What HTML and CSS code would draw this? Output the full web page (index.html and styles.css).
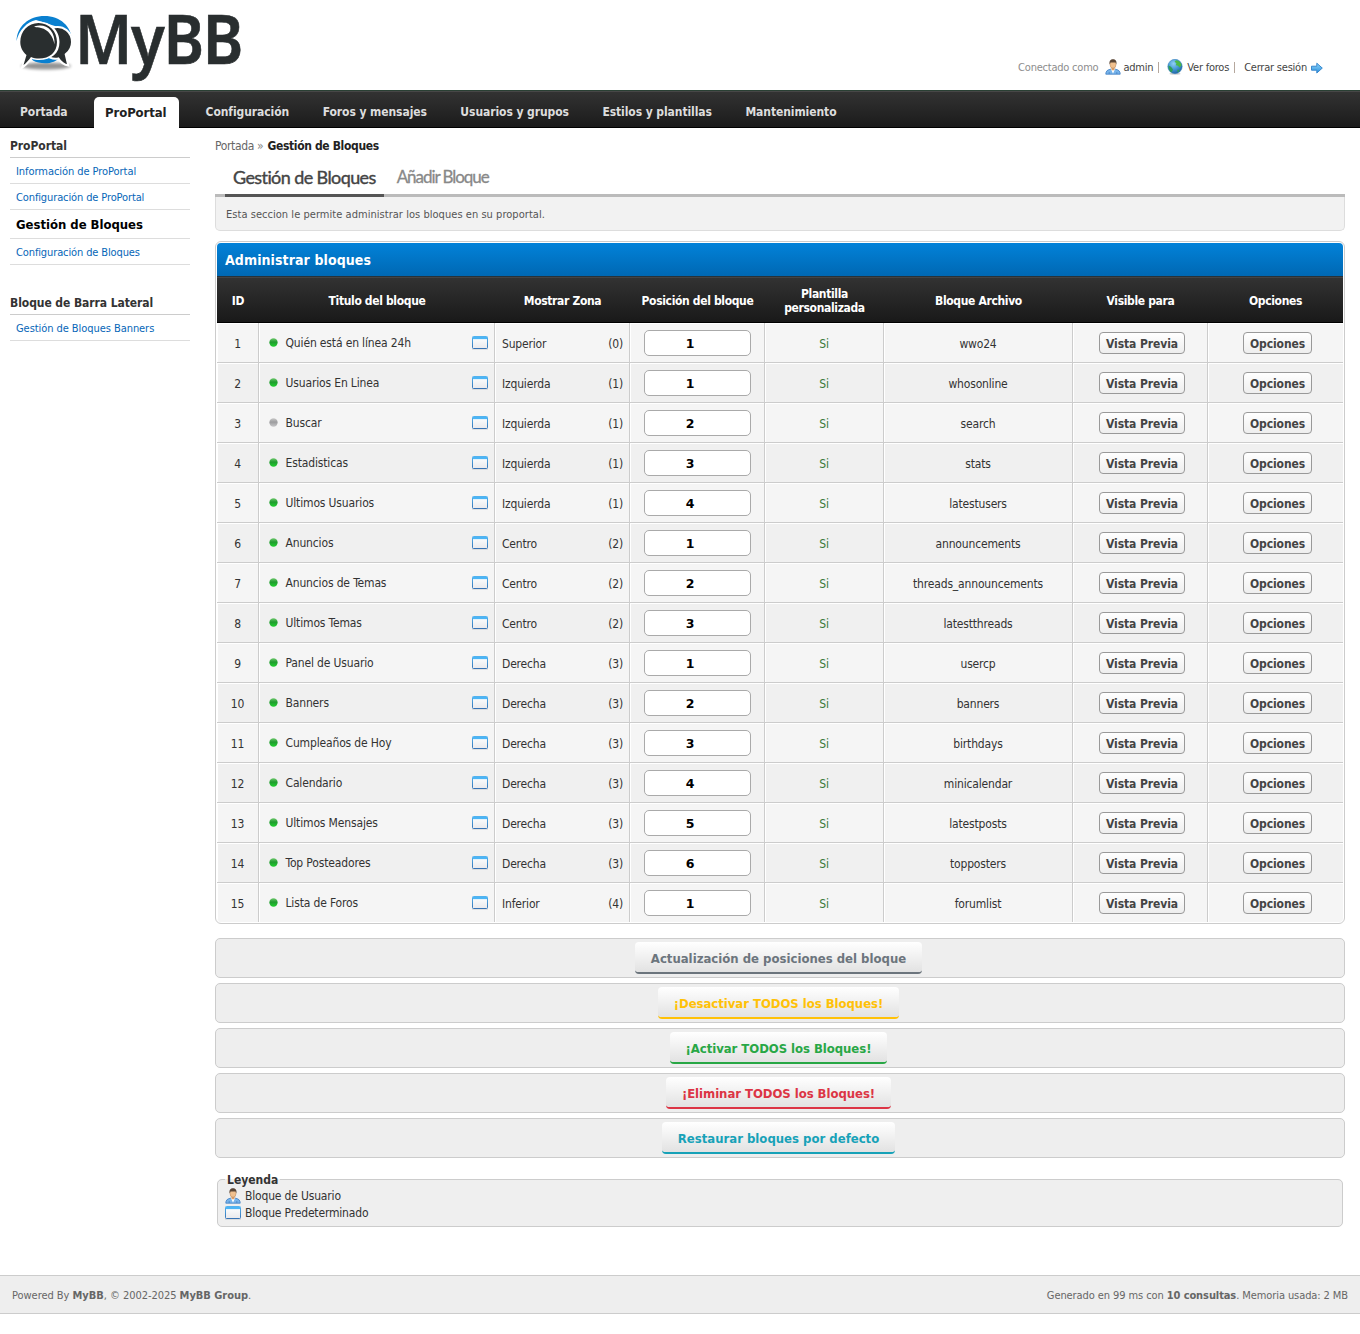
FILE: index.html
```html
<!DOCTYPE html>
<html lang="es">
<head>
<meta charset="utf-8">
<title>Gestión de Bloques</title>
<link rel="stylesheet" href="styles.css">
</head>
<body>
<svg class="sprite" width="0" height="0" aria-hidden="true">
  <defs>
    <linearGradient id="g-win" x1="0" y1="0" x2="0" y2="1"><stop offset="0" stop-color="#fff"/><stop offset="1" stop-color="#e9e9ec"/></linearGradient>
    <linearGradient id="g-edge" x1="0" y1="0" x2="0" y2="1"><stop offset="0" stop-color="#52b2ee"/><stop offset="1" stop-color="#3773b5"/></linearGradient>
    <linearGradient id="g-on" x1="0" y1="0" x2="0" y2="1"><stop offset="0" stop-color="#6cc86c"/><stop offset=".45" stop-color="#209a2e"/><stop offset="1" stop-color="#1fd02e"/></linearGradient>
    <linearGradient id="g-off" x1="0" y1="0" x2="0" y2="1"><stop offset="0" stop-color="#c8c8c8"/><stop offset=".45" stop-color="#9c9c9e"/><stop offset="1" stop-color="#c6c6c8"/></linearGradient>
    <radialGradient id="g-globe" cx=".4" cy=".3" r=".7"><stop offset="0" stop-color="#8fd0f5"/><stop offset=".6" stop-color="#3f93d2"/><stop offset="1" stop-color="#2466a5"/></radialGradient>
    <linearGradient id="g-arrow" x1="0" y1="0" x2="0" y2="1"><stop offset="0" stop-color="#8fd8fb"/><stop offset="1" stop-color="#2b8fdd"/></linearGradient>
    <filter id="f-soft" x="-20%" y="-80%" width="140%" height="260%"><feGaussianBlur stdDeviation="1.8"/></filter>
  </defs>
  <symbol id="win" viewBox="0 0 16 14">
    <rect x=".5" y=".5" width="15" height="12" rx=".8" fill="url(#g-win)" stroke="url(#g-edge)"/>
    <rect x="1" y="1" width="14" height="2" fill="#4cb5f5"/>
    <rect x="1" y="3" width="14" height="1" fill="#e4f3fc"/>
    <rect x="0" y="13" width="16" height="1" fill="#000" opacity=".08"/>
  </symbol>
  <symbol id="on" viewBox="0 0 10 10"><circle cx="5" cy="5" r="4.600" fill="url(#g-on)"/></symbol>
  <symbol id="off" viewBox="0 0 10 10"><circle cx="5" cy="5" r="4.600" fill="url(#g-off)"/></symbol>
  <symbol id="user" viewBox="0 0 16 16">
    <path d="M.8 15.200c0-3 1.400-4.400 4.800-5h4.800c3.400.6 4.800 2 4.800 5z" fill="#76b3ea" stroke="#3f7fc4" stroke-width=".8"/>
    <path d="M5.800 9.800 8 14.800l2.200-5z" fill="#fff"/>
    <path d="M6.500 8h3v2.300L8 11.800 6.500 10.300z" fill="#dda06a"/>
    <ellipse cx="8" cy="5.500" rx="3" ry="3.800" fill="#f0c08e" stroke="#a8713f" stroke-width=".4"/>
    <path d="M4.600 5.400C4 1.900 5.600.3 8 .3s4 1.600 3.400 5.100L10.700 3.600 5.500 3.400z" fill="#5a4636"/>
    <path d="M4.200 15v-2M11.800 15v-2" stroke="#3f7fc4" stroke-width=".7"/>
  </symbol>
  <symbol id="globe" viewBox="0 0 16 16">
    <ellipse cx="8" cy="14.800" rx="5.500" ry="1" fill="#000" opacity=".18"/>
    <circle cx="8" cy="7.500" r="7.200" fill="url(#g-globe)" stroke="#2d78b4" stroke-width=".5"/>
    <path d="M9 1.200c3 .3 5 2.200 5.600 5l-2 2.400-1.600-1.800-2.200-.6.600-2-1.800-1.400z" fill="#4db848"/>
    <path d="M1.500 6.500 4 7.800l2 2.600-1.400 3.200C2.600 12.400 1.100 9.600 1.500 6.500zM10.500 10.500l2 .5-1 2.200-1.200-.8z" fill="#2e9e58"/>
  </symbol>
  <symbol id="arrow" viewBox="0 0 12 12">
    <path d="M.5 4.200h5.300V1.200l5.500 4.900-5.500 4.900V8.200H.5z" fill="url(#g-arrow)" stroke="#2b7fc9" stroke-width=".9" stroke-linejoin="round"/>
  </symbol>
</svg>

<header class="header">
  <svg class="logo" width="270" height="90" viewBox="0 0 270 90" role="img" aria-label="MyBB">
    <ellipse cx="46" cy="66" rx="25" ry="3.500" fill="#000" opacity=".42" filter="url(#f-soft)"/>
    <path d="M16.500 41C17 26 29 16 44.500 16S71.500 26 72 41C70 34 65 29 58 27L36 20C27 22 19 30 16.500 41z" fill="#0a80d0"/>
    <path d="M30 57h30c-3 4-8.500 6.300-15 6.300-4.500 0-9-1-12-2.700z" fill="#0a80d0"/>
    <path d="M52 28c12-4 20 5 20 14 0 6-2.800 9.700-6.300 12.400l2.600 11.200c-5-.8-8-4-10-7.200C48 60 44 54 44 44c0-9 1-14 8-16z" fill="#292e2f" stroke="#fff" stroke-width="2"/>
    <path d="M38.500 21.500C51 21.500 59.500 30.500 59.500 42S51.500 60 39 60c-2.500 0-5-.3-7-1-3 4-6.500 8.200-12 11L25 55.500C21.500 52 19.300 47.500 19.300 42 19.300 30.500 27 21.500 38.500 21.500z" fill="#fff"/>
    <path d="M38.500 23C49 23 57 31.500 57 42S49.500 58.500 39 58.500c-2.800 0-5.500-.5-8-1.500-2.500 3.500-4.800 6-7.500 8L26.500 55C22.500 51.500 20.300 47.500 20.300 42 20.300 31.500 28 23 38.500 23z" fill="#292e2f"/>
    <path d="M34 26.600c11-4 21.500 3 20.500 17.900-1.500-8-6-15-13.500-16.600-2.500-.5-4 0-7-1.300z" fill="#fff"/>
    <text class="logo-text" x="75" y="64" textLength="167" lengthAdjust="spacingAndGlyphs">MyBB</text>
  </svg>
  <div class="welcome">
    <span class="muted">Conectado como</span>
    <svg class="w-user" width="16" height="16"><use href="#user"/></svg><a>admin</a><i class="sep"></i>
    <svg class="w-globe" width="16" height="16"><use href="#globe"/></svg><a>Ver foros</a><i class="sep"></i>
    <a class="w-out">Cerrar sesión</a><svg class="w-arrow" width="12" height="12"><use href="#arrow"/></svg>
  </div>
</header>

<nav class="nav">
  <a>Portada</a><a class="active">ProPortal</a><a>Configuración</a><a>Foros y mensajes</a><a>Usuarios y grupos</a><a>Estilos y plantillas</a><a>Mantenimiento</a>
</nav>

<div class="page">
  <aside class="side">
    <h3>ProPortal</h3>
    <ul>
      <li><a>Información de ProPortal</a></li>
      <li><a>Configuración de ProPortal</a></li>
      <li class="active"><a>Gestión de Bloques</a></li>
      <li><a>Configuración de Bloques</a></li>
    </ul>
    <h3>Bloque de Barra Lateral</h3>
    <ul>
      <li><a>Gestión de Bloques Banners</a></li>
    </ul>
  </aside>

  <main class="main">
    <div class="crumb"><a>Portada</a> <span>»</span> <b>Gestión de Bloques</b></div>
    <div class="tabs"><a class="active">Gestión de Bloques</a><a>Añadir Bloque</a></div>
    <div class="intro">Esta seccion le permite administrar los bloques en su proportal.</div>

    <section class="box">
      <h2>Administrar bloques</h2>
      <div class="row head"><div>ID</div><div>Titulo del bloque</div><div>Mostrar Zona</div><div>Posición del bloque</div><div>Plantilla personalizada</div><div>Bloque Archivo</div><div>Visible para</div><div>Opciones</div></div>
      <div class="row"><div>1</div><div class="title"><svg class="dot"><use href="#on"/></svg><span>Quién está en línea 24h</span><svg class="win"><use href="#win"/></svg></div><div class="zone"><span>Superior</span><span>(0)</span></div><div><input type="text" value="1"></div><div class="yes">Si</div><div>wwo24</div><div class="act"><a>Vista Previa</a></div><div class="act"><a>Opciones</a></div></div>
      <div class="row"><div>2</div><div class="title"><svg class="dot"><use href="#on"/></svg><span>Usuarios En Linea</span><svg class="win"><use href="#win"/></svg></div><div class="zone"><span>Izquierda</span><span>(1)</span></div><div><input type="text" value="1"></div><div class="yes">Si</div><div>whosonline</div><div class="act"><a>Vista Previa</a></div><div class="act"><a>Opciones</a></div></div>
      <div class="row"><div>3</div><div class="title"><svg class="dot"><use href="#off"/></svg><span>Buscar</span><svg class="win"><use href="#win"/></svg></div><div class="zone"><span>Izquierda</span><span>(1)</span></div><div><input type="text" value="2"></div><div class="yes">Si</div><div>search</div><div class="act"><a>Vista Previa</a></div><div class="act"><a>Opciones</a></div></div>
      <div class="row"><div>4</div><div class="title"><svg class="dot"><use href="#on"/></svg><span>Estadisticas</span><svg class="win"><use href="#win"/></svg></div><div class="zone"><span>Izquierda</span><span>(1)</span></div><div><input type="text" value="3"></div><div class="yes">Si</div><div>stats</div><div class="act"><a>Vista Previa</a></div><div class="act"><a>Opciones</a></div></div>
      <div class="row"><div>5</div><div class="title"><svg class="dot"><use href="#on"/></svg><span>Ultimos Usuarios</span><svg class="win"><use href="#win"/></svg></div><div class="zone"><span>Izquierda</span><span>(1)</span></div><div><input type="text" value="4"></div><div class="yes">Si</div><div>latestusers</div><div class="act"><a>Vista Previa</a></div><div class="act"><a>Opciones</a></div></div>
      <div class="row"><div>6</div><div class="title"><svg class="dot"><use href="#on"/></svg><span>Anuncios</span><svg class="win"><use href="#win"/></svg></div><div class="zone"><span>Centro</span><span>(2)</span></div><div><input type="text" value="1"></div><div class="yes">Si</div><div>announcements</div><div class="act"><a>Vista Previa</a></div><div class="act"><a>Opciones</a></div></div>
      <div class="row"><div>7</div><div class="title"><svg class="dot"><use href="#on"/></svg><span>Anuncios de Temas</span><svg class="win"><use href="#win"/></svg></div><div class="zone"><span>Centro</span><span>(2)</span></div><div><input type="text" value="2"></div><div class="yes">Si</div><div>threads_announcements</div><div class="act"><a>Vista Previa</a></div><div class="act"><a>Opciones</a></div></div>
      <div class="row"><div>8</div><div class="title"><svg class="dot"><use href="#on"/></svg><span>Ultimos Temas</span><svg class="win"><use href="#win"/></svg></div><div class="zone"><span>Centro</span><span>(2)</span></div><div><input type="text" value="3"></div><div class="yes">Si</div><div>latestthreads</div><div class="act"><a>Vista Previa</a></div><div class="act"><a>Opciones</a></div></div>
      <div class="row"><div>9</div><div class="title"><svg class="dot"><use href="#on"/></svg><span>Panel de Usuario</span><svg class="win"><use href="#win"/></svg></div><div class="zone"><span>Derecha</span><span>(3)</span></div><div><input type="text" value="1"></div><div class="yes">Si</div><div>usercp</div><div class="act"><a>Vista Previa</a></div><div class="act"><a>Opciones</a></div></div>
      <div class="row"><div>10</div><div class="title"><svg class="dot"><use href="#on"/></svg><span>Banners</span><svg class="win"><use href="#win"/></svg></div><div class="zone"><span>Derecha</span><span>(3)</span></div><div><input type="text" value="2"></div><div class="yes">Si</div><div>banners</div><div class="act"><a>Vista Previa</a></div><div class="act"><a>Opciones</a></div></div>
      <div class="row"><div>11</div><div class="title"><svg class="dot"><use href="#on"/></svg><span>Cumpleaños de Hoy</span><svg class="win"><use href="#win"/></svg></div><div class="zone"><span>Derecha</span><span>(3)</span></div><div><input type="text" value="3"></div><div class="yes">Si</div><div>birthdays</div><div class="act"><a>Vista Previa</a></div><div class="act"><a>Opciones</a></div></div>
      <div class="row"><div>12</div><div class="title"><svg class="dot"><use href="#on"/></svg><span>Calendario</span><svg class="win"><use href="#win"/></svg></div><div class="zone"><span>Derecha</span><span>(3)</span></div><div><input type="text" value="4"></div><div class="yes">Si</div><div>minicalendar</div><div class="act"><a>Vista Previa</a></div><div class="act"><a>Opciones</a></div></div>
      <div class="row"><div>13</div><div class="title"><svg class="dot"><use href="#on"/></svg><span>Ultimos Mensajes</span><svg class="win"><use href="#win"/></svg></div><div class="zone"><span>Derecha</span><span>(3)</span></div><div><input type="text" value="5"></div><div class="yes">Si</div><div>latestposts</div><div class="act"><a>Vista Previa</a></div><div class="act"><a>Opciones</a></div></div>
      <div class="row"><div>14</div><div class="title"><svg class="dot"><use href="#on"/></svg><span>Top Posteadores</span><svg class="win"><use href="#win"/></svg></div><div class="zone"><span>Derecha</span><span>(3)</span></div><div><input type="text" value="6"></div><div class="yes">Si</div><div>topposters</div><div class="act"><a>Vista Previa</a></div><div class="act"><a>Opciones</a></div></div>
      <div class="row"><div>15</div><div class="title"><svg class="dot"><use href="#on"/></svg><span>Lista de Foros</span><svg class="win"><use href="#win"/></svg></div><div class="zone"><span>Inferior</span><span>(4)</span></div><div><input type="text" value="1"></div><div class="yes">Si</div><div>forumlist</div><div class="act"><a>Vista Previa</a></div><div class="act"><a>Opciones</a></div></div>
    </section>

    <div class="bars">
      <div class="bar"><button class="btn grey">Actualización de posiciones del bloque</button></div>
      <div class="bar"><button class="btn amber">¡Desactivar TODOS los Bloques!</button></div>
      <div class="bar"><button class="btn green">¡Activar TODOS los Bloques!</button></div>
      <div class="bar"><button class="btn red">¡Eliminar TODOS los Bloques!</button></div>
      <div class="bar"><button class="btn teal">Restaurar bloques por defecto</button></div>
    </div>

    <fieldset class="legend">
      <legend>Leyenda</legend>
      <div><svg width="16" height="16"><use href="#user"/></svg>Bloque de Usuario</div>
      <div><svg width="16" height="14"><use href="#win"/></svg>Bloque Predeterminado</div>
    </fieldset>
  </main>
</div>

<footer class="footer">
  <span class="f-left">Powered By <b>MyBB</b>, © 2002-2025 <b>MyBB Group</b>.</span>
  <span class="f-right">Generado en 99 ms con <b>10 consultas</b>. Memoria usada: 2 MB</span>
</footer>
</body>
</html>
```
FILE: styles.css
```css
* { box-sizing: border-box; }

body {
  margin: 0;
  background: #fff;
  color: #333;
  font: 12px/16px "DejaVu Sans Condensed", "DejaVu Sans", sans-serif;
  letter-spacing: -0.17px;
}

svg { display: block; flex: none; }
.sprite { position: absolute; }
h2, h3, ul { margin: 0; padding: 0; list-style: none; }

/* Header */
.header {
  height: 90px;
  display: flex;
  justify-content: space-between;
  align-items: flex-start;
}
.logo { overflow: visible; }
.logo-text {
  font: 600 68.5px "Noto Sans", sans-serif;
  fill: #292e2f;
  stroke: #292e2f;
  stroke-width: 0.6px;
  letter-spacing: -1.5px;
}
.welcome {
  display: flex;
  align-items: center;
  height: 18px;
  margin: 58px 37px 0 0;
  font-size: 11px;
  line-height: 18px;
  letter-spacing: -0.22px;
  color: #444;
}
.welcome span, .welcome a { padding-top: 1px; }
.muted { color: #8d8d8d; margin-right: 7px; }
.w-user { margin-right: 2px; }
.w-globe { margin: 0 4px 0 8px; }
.w-out { margin-left: 9px; }
.w-arrow { margin: 2px 0 0 4px; }
.sep { width: 1px; height: 11px; margin-left: 5px; background: #b5a79d; }

/* Main navigation */
.nav {
  height: 38px;
  display: flex;
  align-items: flex-end;
  padding-left: 9px;
  border-top: 1px solid #2a4034;
  border-bottom: 1px solid #000;
  background: linear-gradient(#333, #1b1b1b);
  box-shadow: inset 0 1px #474747;
  font-weight: bold;
  letter-spacing: -0.08px;
}
.nav a { color: #ddd; height: 30px; line-height: 30px; padding: 0 11px; margin-right: 11.500px; }
.nav a.active {
  width: 85px;
  height: 31px;
  line-height: 32px;
  margin: 0 15.500px -1px 4px;
  background: #fff;
  color: #222;
  border-radius: 5px 5px 0 0;
  font-size: 13px;
  letter-spacing: -0.1px;
}

/* Two column layout */
.page { display: flex; gap: 25px; padding: 0 15px 0 10px; height: 1147px; }
.side { width: 180px; flex: none; }
.main { flex: 1; min-width: 0; }

.side h3 {
  height: 30px;
  padding-top: 10px;
  border-bottom: 1px solid #ccc;
  font-size: 12px;
  line-height: 16px;
  letter-spacing: -0.07px;
}
.side h3:not(:first-child) { margin-top: 20px; }
.side li {
  height: 26px;
  padding-left: 6px;
  border-bottom: 1px solid #ddd;
  font-size: 11px;
  line-height: 27px;
  letter-spacing: -0.12px;
}
.side li:first-child { letter-spacing: -0.06px; }
.side li.active { height: 29px; font-weight: bold; font-size: 13px; line-height: 29px; letter-spacing: -0.03px; }
.side li a { color: #0666b8; }
.side li.active a { color: #000; }

.crumb { height: 38px; padding-top: 10px; color: #888; letter-spacing: -0.35px; }
.crumb a { color: #666; }
.crumb b { color: #222; margin-left: 1px; }

.tabs {
  display: flex;
  height: 31px;
  padding-left: 10px;
  border-bottom: 3px solid #bbb;
  border-radius: 5px 5px 0 0;
  font-family: Lato, sans-serif;
}
.tabs a {
  height: 31px;
  margin-left: 13px;
  color: #888;
  font-size: 17px;
  line-height: 22px;
  letter-spacing: -1.05px;
  -webkit-text-stroke: 0.3px;
}
.tabs a.active {
  margin: 0;
  padding: 0 8px;
  border-bottom: 3px solid #555;
  color: #444;
  font-size: 18px;
  line-height: 23px;
  letter-spacing: -0.6px;
  -webkit-text-stroke: 0.4px;
}
.intro {
  height: 34px;
  padding-left: 10px;
  border: 1px solid #ddd;
  border-top: 0;
  border-radius: 0 0 5px 5px;
  background: #f2f2f2;
  color: #555;
  font-size: 11px;
  line-height: 35px;
  letter-spacing: 0.04px;
}

/* Block table */
.box {
  margin-top: 10px;
  padding: 1px;
  border: 1px solid #ccc;
  border-radius: 6px;
}
.box h2 {
  height: 33px;
  padding-left: 8px;
  border-radius: 4px 4px 0 0;
  background: linear-gradient(#0282d9, #0068b3);
  color: #fff;
  font-size: 14px;
  line-height: 34px;
  letter-spacing: 0.09px;
}
.row {
  display: grid;
  grid-template-columns: 42px 236px 135px 135px 119px 189px 135px 135px;
  height: 40px;
  text-align: center;
}
.row > div {
  display: flex;
  align-items: center;
  justify-content: center;
  padding-top: 2px;
  border: solid #ccc;
  border-width: 0 1px 1px 0;
  background: #f5f5f5;
  box-shadow: inset 1px 1px #fff;
}
.row > div:last-child { border-right: 0; }
.row:nth-of-type(odd) > div { background: #f0f0f0; }
.row:last-child { height: 39px; }
.row:last-child > div { border-bottom: 0; }
.row:last-child > div:first-child { border-bottom-left-radius: 4px; }
.row:last-child > div:last-child { border-bottom-right-radius: 4px; }

.row.head {
  height: 47px;
  background: linear-gradient(#333, #191919);
  border-top: 1px solid #26323a;
  border-bottom: 1px solid #000;
  box-shadow: inset 0 1px #444;
  color: #fff;
  font-weight: bold;
  line-height: 14px;
  letter-spacing: -0.35px;
}
.row.head > div { background: none; border: 0; box-shadow: none; padding: 3px 3px 0; }

.row > .title { padding: 0 6px 0 10px; justify-content: flex-start; letter-spacing: -0.15px; }
.title .dot { width: 9px; height: 9px; margin-right: 7.500px; }
.title .win { width: 16px; height: 14px; margin-left: auto; }
.row > .zone { justify-content: space-between; padding-left: 7px; padding-right: 6px; }
.row > .yes { color: #3a7a3a; }

input {
  width: 107px;
  height: 26px;
  margin: -1px 0 0;
  padding: 0 14px 0 0;
  border: 1px solid #aaa;
  border-radius: 5px;
  background: #fff;
  color: #000;
  font: bold 12.5px "DejaVu Sans", sans-serif;
  text-align: center;
}
.row > .act { padding-left: 4px; }
.act a {
  height: 22px;
  margin-top: -1px;
  padding: 0 6px;
  border: 1px solid #999;
  border-radius: 4px;
  background: linear-gradient(#fff, #eee);
  color: #444;
  font-weight: bold;
  line-height: 22px;
  letter-spacing: -0.09px;
}

/* Action bars */
.bars { display: flex; flex-direction: column; gap: 5px; margin-top: 14px; }
.bar {
  height: 40px;
  display: flex;
  justify-content: center;
  padding: 3px 3px 0 0;
  border: 1px solid #ccc;
  border-radius: 5px;
  background: #eee;
}
.btn {
  height: 32px;
  padding: 3px 16px 0;
  border: 0;
  border-bottom: 2px solid;
  border-radius: 4px;
  background: linear-gradient(#fff, #e2e2e2);
  font: bold 13px/27px "DejaVu Sans Condensed", sans-serif;
}
.grey { color: #6c757d; }
.amber { color: #ffc107; letter-spacing: -0.04px; }
.green { color: #28a745; letter-spacing: -0.05px; }
.red { color: #dc3545; letter-spacing: -0.05px; }
.teal { color: #17a2b8; }

/* Legend */
.legend {
  height: 57px;
  margin: 12px 2px 0;
  padding: 0 7px;
  border: 1px solid #ccc;
  border-radius: 5px;
  background: #efefef;
}
.legend legend { padding: 2px 2px 0; font-weight: bold; line-height: 16px; letter-spacing: 0; }
.legend div { display: flex; align-items: center; gap: 4px; height: 17px; margin-top: -1px; }
.legend div + div { margin-top: 0; }

/* Footer */
.footer {
  display: flex;
  justify-content: space-between;
  align-items: center;
  height: 39px;
  padding: 2px 12px 0;
  border: solid #ccc;
  border-width: 1px 0;
  background: #eee;
  color: #666;
  font-size: 11px;
}
.f-left { letter-spacing: -0.04px; }
.f-right { letter-spacing: -0.09px; }
```
